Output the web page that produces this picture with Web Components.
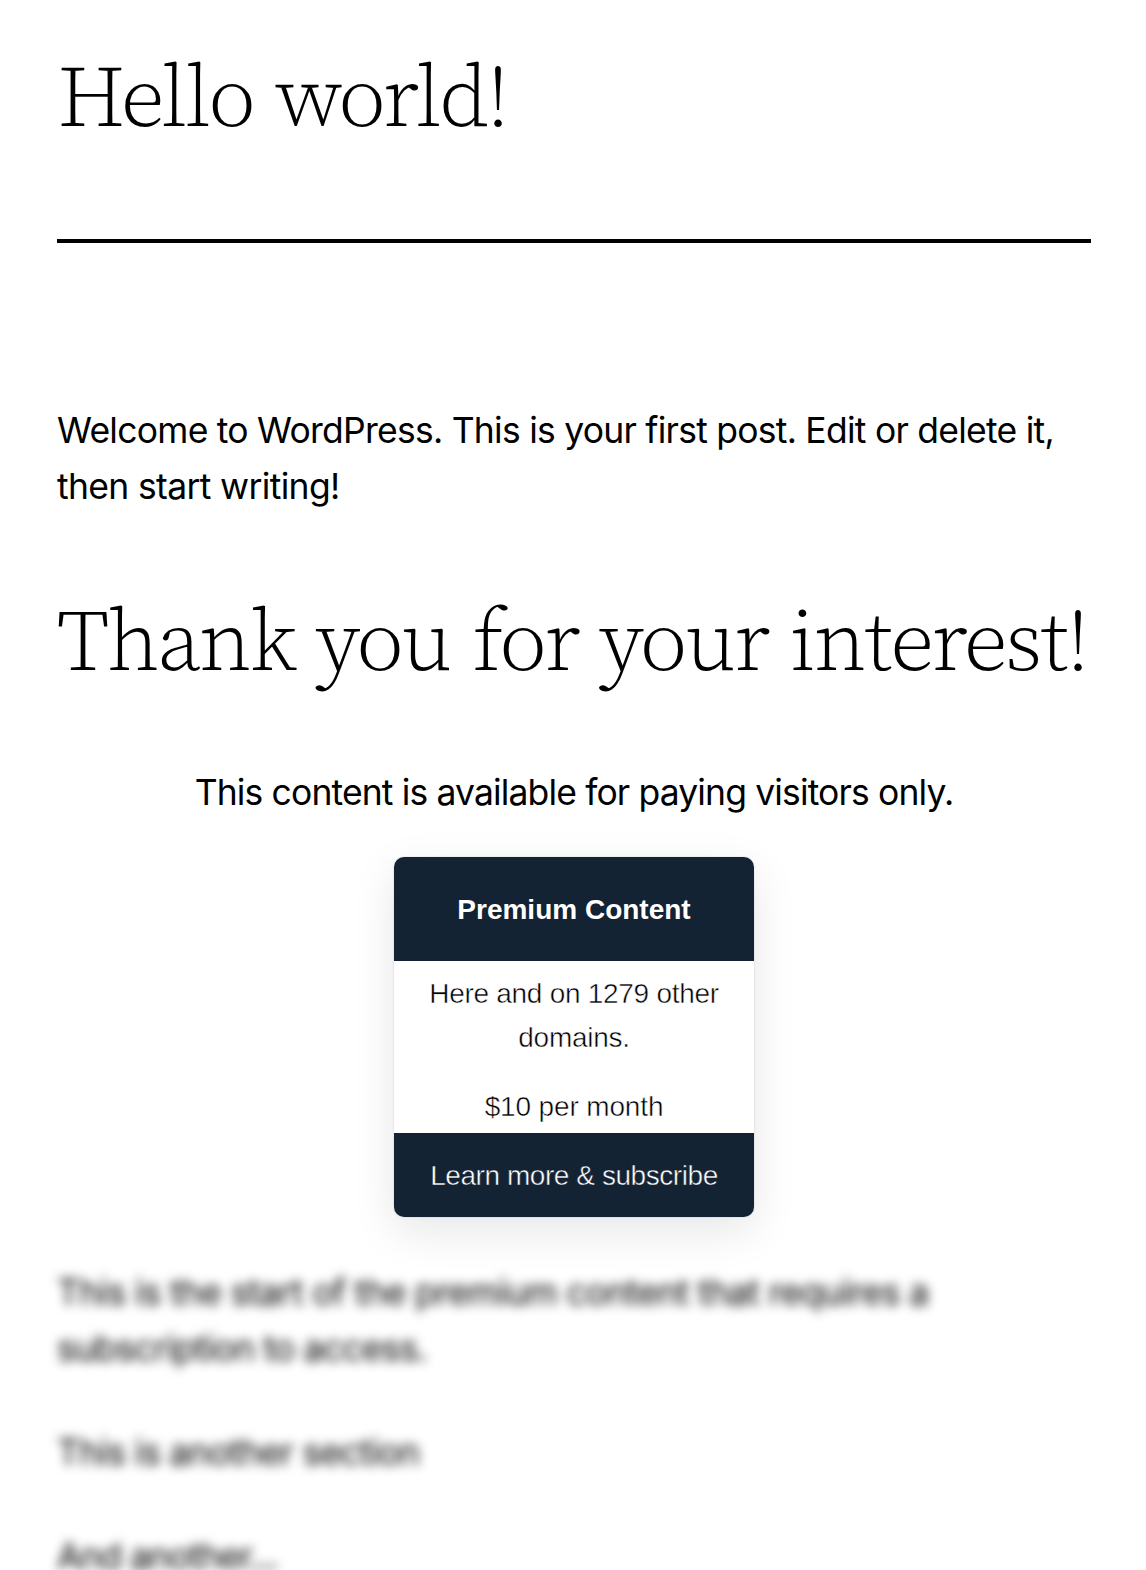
<!DOCTYPE html><html lang="en"><head><meta charset="utf-8"><title>Hello world!</title>
<style>html,body{margin:0;background:#fff}body{height:1570px;overflow:hidden}</style></head><body>
<blog-post>
<post-title slot="title" style="--ls:-2.5px;--ws:4px">Hello world!</post-title>
<post-text><text-line style="--ls:-.75px">Welcome to WordPress. This is your first post. Edit or delete it,</text-line><text-line style="--ls:-.65px">then start writing!</text-line></post-text>
<post-title class="b" style="--ls:-2.2px;--ws:3px">Thank you for your interest!</post-title>
<post-text class="c"><text-line style="--ls:-.86px">This content is available for paying visitors only.</text-line></post-text>
<premium-card></premium-card>
<locked-text></locked-text>
</blog-post>
<script>
const define=(n,html)=>customElements.define(n,class extends HTMLElement{constructor(){super();this.attachShadow({mode:'open'}).innerHTML=html}});
define('blog-post',`<style>:host{display:flex;flex-direction:column;padding:46px 55px 0 57px;color:#000}
header{padding-bottom:93px;border-bottom:4px solid #000;margin-bottom:160px}
::slotted(.b){margin:75px 0}::slotted(.c){text-align:center}::slotted(premium-card){align-self:center;margin:36px 0 48px}</style><header><slot name="title"></slot></header><slot></slot>`);
define('post-title',`<style>:host{display:block;font:280 87px/100px 'Source Serif 4','Liberation Serif',serif;letter-spacing:var(--ls,0);word-spacing:var(--ws,0);white-space:nowrap}</style><slot></slot>`);
define('post-text',`<style>:host{display:block;font:400 35.5px/56px Inter,'Liberation Sans',sans-serif}</style><slot></slot>`);
define('text-line',`<style>:host{display:block;letter-spacing:var(--ls,0);white-space:nowrap}</style><slot></slot>`);
define('premium-card',`<style>:host{display:flex;flex-direction:column;width:360px;height:360px;border-radius:10px;overflow:hidden;background:#fff;box-shadow:0 0 2px rgba(19,35,51,.18),0 14px 44px rgba(10,18,26,.1);font:400 28px/44px 'Liberation Sans',Arial,sans-serif;text-align:center}
header,footer{background:#132333;color:#fff;flex:none}
header{padding:31px 0 29px;font-weight:700}
main{flex:1;padding-top:11px;display:flex;flex-direction:column;-webkit-text-stroke:.5px #fff}
footer{padding:21px 0 19px;-webkit-text-stroke:.5px #132333}
.price{margin-top:25px}</style>
<header>Premium Content</header><main><text-line style="--ls:-.28px">Here and on 1279 other</text-line><text-line style="--ls:-.28px">domains.</text-line><text-line class="price" style="--ls:-.14px">$10 per month</text-line></main><footer><text-line style="--ls:-.44px">Learn more &amp; subscribe</text-line></footer>`);
define('locked-text',`<style>:host{display:flex;flex-direction:column;gap:48px;filter:blur(5.4px)}</style>
<post-text><text-line style="--ls:-.7px">This is the start of the premium content that requires a</text-line><text-line style="--ls:-.82px">subscription to access.</text-line></post-text><post-text><text-line style="--ls:-.75px">This is another section</text-line></post-text><post-text><text-line style="--ls:-1px">And another...</text-line></post-text>`);
</script></body></html>
